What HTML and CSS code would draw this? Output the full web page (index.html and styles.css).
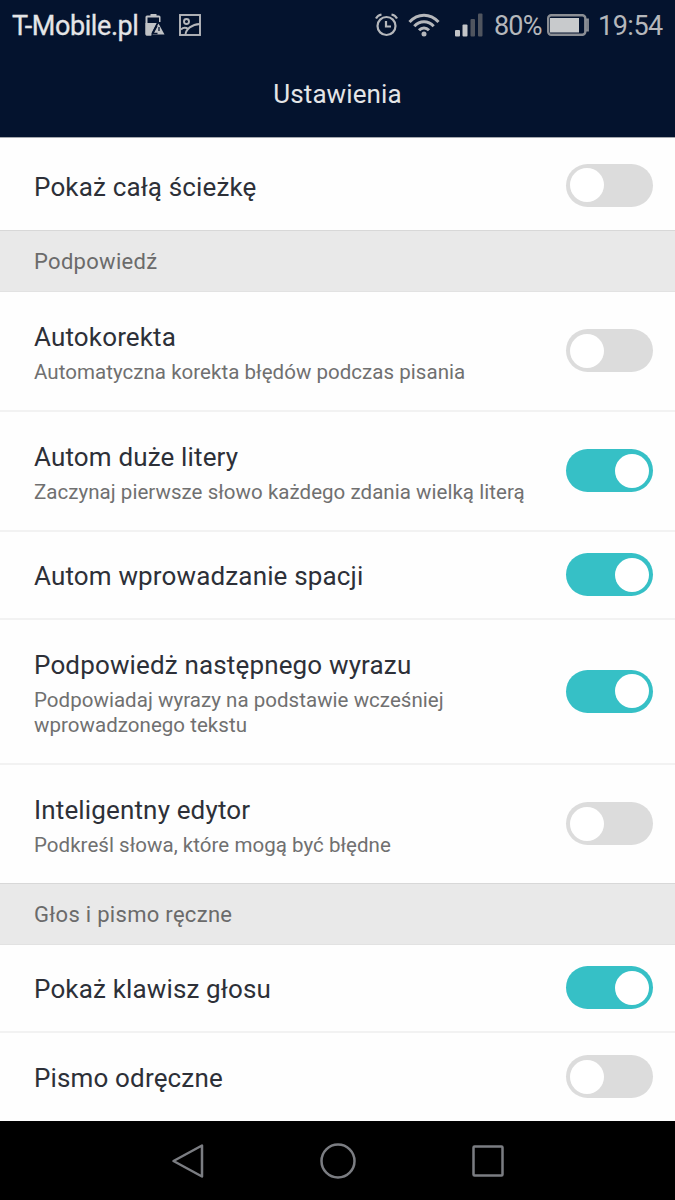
FILE: index.html
```
<!DOCTYPE html>
<html lang="pl">
<head>
    <meta charset="UTF-8">
    <meta name="viewport" content="width=device-width, initial-scale=1.0">
    <title>Ustawienia</title>
    <link rel="stylesheet" href="styles.css">
</head>
<body>
    <header class="header">
        <div class="status-bar">
            <span class="carrier">T-Mobile.pl</span>
            <svg class="icon-power" width="20" height="24" viewBox="0 0 20 24">
                <path d="M5.500 2.500V1h6v1.500h2.500a1.500 1.500 0 0 1 1.500 1.500v5h-1.500V4.500H2.500v5.500h9L6 20v2.500H2a1.500 1.500 0 0 1-1.500-1.500V4A1.500 1.500 0 0 1 2 2.500z" fill="#c0c2c5"/>
                <path d="M.500 10h11L6.500 20v2.500H2A1.500 1.500 0 0 1 .500 21z" fill="#c0c2c5"/>
                <path d="M13.500 10.500l6 11H7.500z" fill="#c0c2c5"/>
                <path d="M12 13l-4 7.500h4.500M14 14v4" fill="none" stroke="#05132f" stroke-width="1.300"/>
            </svg>
            <svg class="icon-picture" width="22" height="22" viewBox="0 0 22 22" fill="none" stroke="#b5b7bb" stroke-width="1.900">
                <rect x="1" y="1" width="20" height="20"/>
                <circle cx="7.500" cy="7.500" r="2.500"/>
                <path d="M2 15.500c2-2 5-2 7.500-.5M6.500 20.500c.5-5.500 6-10 14.500-10.500"/>
            </svg>
            <div class="status-right">
                <svg class="icon-alarm" width="23" height="24" viewBox="0 0 23 24" fill="none" stroke="#b5b7bb" stroke-width="2.200">
                    <circle cx="11.500" cy="13" r="9"/>
                    <path d="M11 8v5.500h5M1 5.500C2 3.500 4 2 6.500 1.500M22 5.500C21 3.500 19 2 16.500 1.500"/>
                </svg>
                <svg class="icon-wifi" width="32" height="24" viewBox="0 0 32 24" fill="none" stroke="#b5b7bb" stroke-width="3">
                    <path d="M1.500 9C10 0 22 0 30.500 9M6.300 13.200c5.500-6 13.900-6 19.400 0M11 17.300c3-3.200 7-3.200 10 0"/>
                    <circle cx="16" cy="21" r="2.500" fill="#b5b7bb" stroke="none"/>
                </svg>
                <svg class="icon-signal" width="28" height="24" viewBox="0 0 28 24">
                    <rect x="0" y="17" width="5" height="6.500" rx="1" fill="#c3c5c8"/>
                    <rect x="7.500" y="11.500" width="5" height="12" rx="1" fill="#c3c5c8"/>
                    <rect x="15.500" y="6" width="4.500" height="17.500" rx="1" fill="#50555f"/>
                    <rect x="23" y="0.500" width="4.500" height="23" rx="1" fill="#50555f"/>
                </svg>
                <span class="percent">80%</span>
                <svg class="icon-battery" width="43" height="22" viewBox="0 0 43 22">
                    <rect x="1.200" y="1.200" width="37.100" height="19.600" rx="3" fill="none" stroke="#8b8e94" stroke-width="2.400"/>
                    <rect x="3" y="4" width="29" height="14.500" fill="#c8cacc"/>
                    <path d="M39 5.500h2v11h-2z" fill="none" stroke="#8b8e94" stroke-width="1.800"/>
                </svg>
                <span class="clock">19:54</span>
            </div>
        </div>
        <h1 class="title">Ustawienia</h1>
    </header>

    <main class="settings">
        <div class="row row-first">
            <div class="row-text">
                <div class="row-title">Pokaż całą ścieżkę</div>
            </div>
            <div class="switch"></div>
        </div>

        <h2 class="section">Podpowiedź</h2>

        <div class="row row-double">
            <div class="row-text">
                <div class="row-title">Autokorekta</div>
                <div class="row-desc">Automatyczna korekta błędów podczas pisania</div>
            </div>
            <div class="switch"></div>
        </div>
        <div class="row row-double">
            <div class="row-text">
                <div class="row-title">Autom duże litery</div>
                <div class="row-desc">Zaczynaj pierwsze słowo każdego zdania wielką literą</div>
            </div>
            <div class="switch on"></div>
        </div>
        <div class="row">
            <div class="row-text">
                <div class="row-title">Autom wprowadzanie spacji</div>
            </div>
            <div class="switch on"></div>
        </div>
        <div class="row row-triple">
            <div class="row-text">
                <div class="row-title">Podpowiedż następnego wyrazu</div>
                <div class="row-desc">Podpowiadaj wyrazy na podstawie wcześniej<br>wprowadzonego tekstu</div>
            </div>
            <div class="switch on"></div>
        </div>
        <div class="row row-double row-last">
            <div class="row-text">
                <div class="row-title">Inteligentny edytor</div>
                <div class="row-desc">Podkreśl słowa, które mogą być błędne</div>
            </div>
            <div class="switch"></div>
        </div>

        <h2 class="section">Głos i pismo ręczne</h2>

        <div class="row">
            <div class="row-text">
                <div class="row-title">Pokaż klawisz głosu</div>
            </div>
            <div class="switch on"></div>
        </div>
        <div class="row row-end">
            <div class="row-text">
                <div class="row-title">Pismo odręczne</div>
            </div>
            <div class="switch"></div>
        </div>
    </main>

    <nav class="nav-bar">
        <svg width="36" height="36" viewBox="0 0 36 36">
            <path d="M32 2.500v31L3.500 18z"/>
        </svg>
        <svg width="36" height="36" viewBox="0 0 36 36">
            <circle cx="18" cy="18" r="16.500"/>
        </svg>
        <svg width="36" height="36" viewBox="0 0 36 36">
            <rect x="3.500" y="3.500" width="29" height="29" rx="1"/>
        </svg>
    </nav>
</body>
</html>
```
FILE: styles.css
```
* {
    box-sizing: border-box;
}
body {
    margin: 0;
    width: 675px;
    height: 1200px;
    overflow: hidden;
    display: flex;
    flex-direction: column;
    font-family: Roboto, "Noto Sans", sans-serif;
    background-color: #fefefe;
}
.header {
    height: 137px;
    background-color: #04132e;
}
.status-bar {
    display: flex;
    align-items: center;
    height: 50px;
    padding: 0 12px;
    font-size: 27px;
}
.carrier {
    width: 126px;
    padding-top: 1px;
    color: #e4e5e7;
    white-space: nowrap;
    letter-spacing: -0.4px;
    -webkit-text-stroke: 0.3px;
}
.icon-power {
    margin-left: 7px;
}
.icon-picture {
    margin-left: 14px;
}
.status-right {
    display: flex;
    align-items: center;
    margin-left: auto;
    color: #b5b7bb;
}
.icon-wifi {
    margin-left: 10px;
}
.icon-signal {
    margin-left: 15px;
}
.percent {
    margin-left: 11px;
    width: 49px;
    padding-top: 1px;
    letter-spacing: -0.8px;
}
.icon-battery {
    margin-left: 4px;
}
.clock {
    margin-left: 8px;
    width: 65px;
    padding-top: 1px;
    letter-spacing: -0.5px;
}
.title {
    margin: 0;
    padding-top: 26px;
    line-height: 36px;
    font-size: 26px;
    font-weight: 400;
    letter-spacing: 0.1px;
    text-align: center;
    color: #e4e5e7;
}
.row {
    display: flex;
    align-items: center;
    justify-content: space-between;
    height: 88px;
    padding: 0 22px 0 34px;
    border-bottom: 2px solid #f2f2f2;
}
.row-first {
    height: 93px;
    padding-top: 3px;
    border-top: 1px solid #a5a8ae;
    border-bottom: none;
}
.row-double {
    height: 120px;
}
.row-triple {
    height: 145px;
}
.row-last {
    height: 118px;
    border-bottom: none;
}
.row-end {
    height: 88px;
    border-bottom: none;
}
.row-text {
    padding-top: 2px;
}
.row-title {
    line-height: 34px;
    font-size: 26px;
    letter-spacing: 0.15px;
    color: #2d3038;
    white-space: nowrap;
}
.row-desc {
    padding-top: 6px;
    line-height: 24.5px;
    font-size: 20.5px;
    letter-spacing: 0.04px;
    color: #707070;
    white-space: nowrap;
}
.section {
    margin: 0;
    height: 62px;
    padding-left: 34px;
    line-height: 62px;
    font-size: 22px;
    font-weight: 400;
    letter-spacing: 0.3px;
    color: #6b6b6b;
    background-color: #e9e9e9;
    border-top: 1px solid #d8d8d8;
    border-bottom: 1px solid #e2e2e2;
}
.switch {
    flex: none;
    display: flex;
    align-items: center;
    width: 87px;
    height: 43px;
    margin-bottom: 1px;
    padding: 0 4px;
    border-radius: 22px;
    background-color: #dcdcdc;
}
.switch::after {
    content: "";
    width: 34px;
    height: 34px;
    border-radius: 50%;
    background-color: #fff;
}
.switch.on {
    justify-content: flex-end;
    background-color: #36c0c6;
}
.nav-bar {
    display: flex;
    align-items: center;
    justify-content: center;
    gap: 114px;
    height: 79px;
    background-color: #000;
}
.nav-bar svg {
    fill: none;
    stroke: #7b7d82;
    stroke-width: 2.5;
    stroke-linejoin: round;
}
```
